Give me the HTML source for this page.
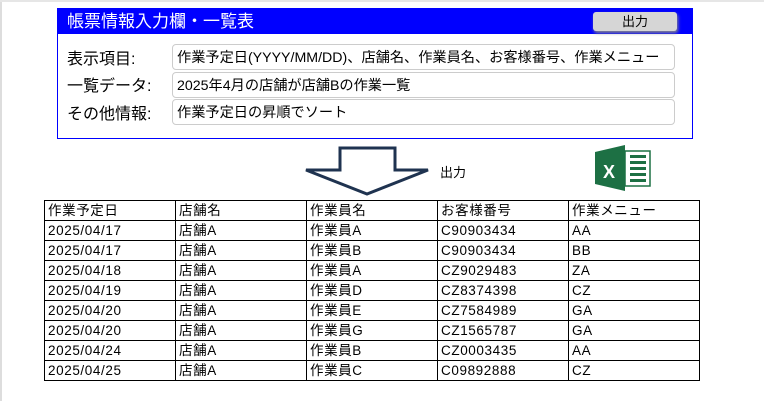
<!DOCTYPE html>
<html><head><meta charset="utf-8"><style>
body{margin:0;width:764px;height:401px;background:#fff;position:relative;overflow:hidden;font-family:"Liberation Sans","Noto Sans CJK JP",sans-serif}
.edge{position:absolute;left:0;top:0;width:2px;height:401px;background:#ddd}
.edget{position:absolute;left:0;top:0;width:764px;height:2px;background:#e6e6e6}
.box{position:absolute;left:57px;top:8px;width:634px;height:129px;border:1px solid #0000ff;background:#fff}
.hd{height:25px;background:#0000ff;color:#fff;font-size:17px;line-height:25px;padding-left:9px}
.btn{position:absolute;left:535px;top:3px;width:84px;height:19px;background:#d6d6d6;border-radius:3px;box-shadow:1px 2px 3px #888;font-size:13px;text-align:center;line-height:19px;color:#000}
.lb{position:absolute;left:9px;font-size:16px;color:#000}
.in{position:absolute;left:114px;height:26px;border:1px solid #ccc;border-radius:4px;font-size:14.2px;line-height:26px;padding-left:4px;box-sizing:border-box;width:503px;white-space:nowrap;overflow:hidden}
table{position:absolute;left:44px;top:200px;border-collapse:collapse;font-size:13.5px;letter-spacing:0.6px}
td{border:1px solid #000;height:19px;padding:0 0 0 3px;width:127px;line-height:19px;white-space:nowrap;overflow:hidden;max-width:127px}
</style></head><body>
<div class="edge"></div><div class="edget"></div>
<div class="box"><div class="hd">帳票情報入力欄・一覧表</div><div class="btn">出力</div>
<div class="lb" style="top:36px">表示項目:</div><div class="in" style="top:35px">作業予定日(YYYY/MM/DD)、店舗名、作業員名、お客様番号、作業メニュー</div>
<div class="lb" style="top:63px">一覧データ:</div><div class="in" style="top:63px">2025年4月の店舗が店舗Bの作業一覧</div>
<div class="lb" style="top:91px">その他情報:</div><div class="in" style="top:90px">作業予定日の昇順でソート</div>
</div>
<svg style="position:absolute;left:0;top:0" width="764" height="401">
<polygon points="340,148 395,148 395,170 428,170 367,194 306,170 340,170" fill="none" stroke="#1f3350" stroke-width="3"/>
<polygon points="595,152 625,145 625,191 595,184" fill="#1d7044"/>
<rect x="625" y="151" width="25" height="35" fill="#fff" stroke="#1d7044" stroke-width="1.5"/>
<g fill="#1d7044"><rect x="630" y="155" width="16" height="3"/><rect x="630" y="161" width="16" height="3"/><rect x="630" y="167" width="16" height="3"/><rect x="630" y="173" width="16" height="3"/><rect x="630" y="179" width="16" height="3"/></g>
<rect x="628" y="154" width="2" height="30" fill="#fff"/>
<text x="603" y="178" fill="#fff" font-size="18" font-weight="bold" font-family="Liberation Sans">X</text>
<text x="440" y="177" font-size="13" font-family="Liberation Sans,Noto Sans CJK JP,sans-serif">出力</text>
</svg>
<table>
<tr><td>作業予定日</td><td>店舗名</td><td>作業員名</td><td>お客様番号</td><td>作業メニュー</td></tr>
<tr><td>2025/04/17</td><td>店舗A</td><td>作業員A</td><td>C90903434</td><td>AA</td></tr>
<tr><td>2025/04/17</td><td>店舗A</td><td>作業員B</td><td>C90903434</td><td>BB</td></tr>
<tr><td>2025/04/18</td><td>店舗A</td><td>作業員A</td><td>CZ9029483</td><td>ZA</td></tr>
<tr><td>2025/04/19</td><td>店舗A</td><td>作業員D</td><td>CZ8374398</td><td>CZ</td></tr>
<tr><td>2025/04/20</td><td>店舗A</td><td>作業員E</td><td>CZ7584989</td><td>GA</td></tr>
<tr><td>2025/04/20</td><td>店舗A</td><td>作業員G</td><td>CZ1565787</td><td>GA</td></tr>
<tr><td>2025/04/24</td><td>店舗A</td><td>作業員B</td><td>CZ0003435</td><td>AA</td></tr>
<tr><td>2025/04/25</td><td>店舗A</td><td>作業員C</td><td>C09892888</td><td>CZ</td></tr>
</table>
</body></html>
